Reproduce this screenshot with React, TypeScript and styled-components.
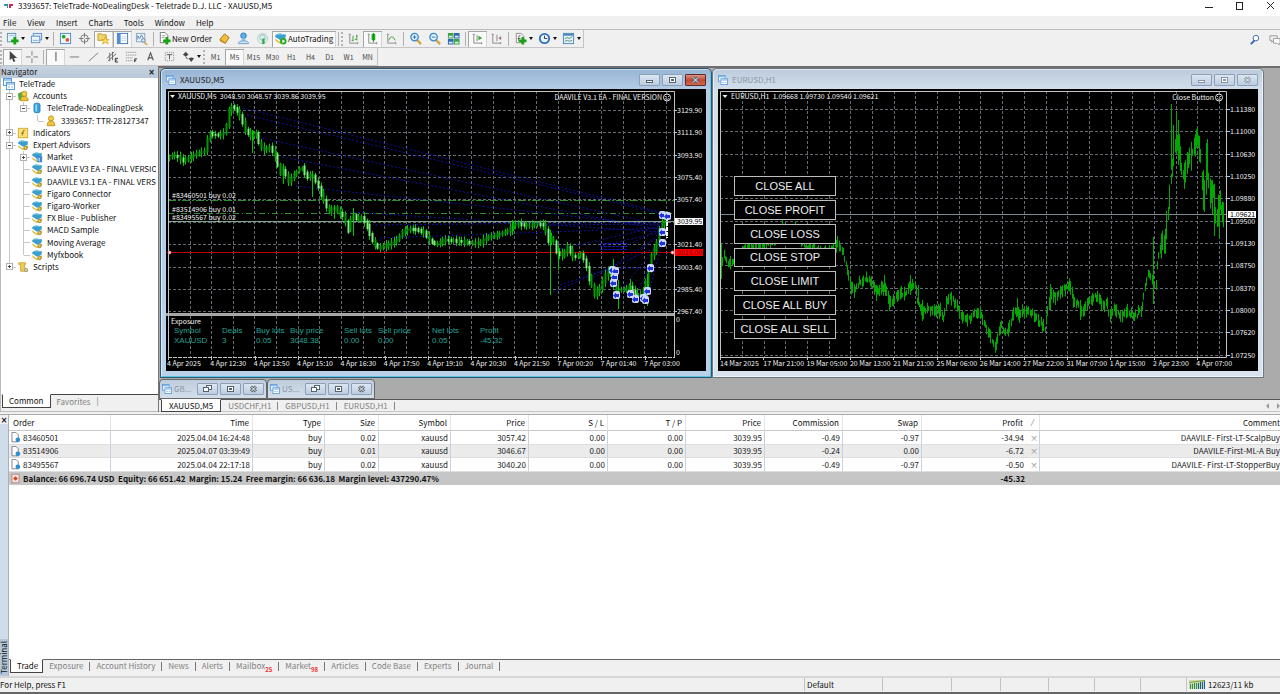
import React from 'react';
import styled, { createGlobalStyle, css } from 'styled-components';

const uiFont = '"Noto Sans CJK SC", "Noto Sans", sans-serif';
const chartFont = '"Noto Sans CJK SC", "Noto Sans", sans-serif';

const Global = createGlobalStyle`
  * { box-sizing: border-box; }
  body { margin: 0; background: #f0f0f0; color: #111; font: 8px/12px ${uiFont}; }
  button, input { font: inherit; color: inherit; margin: 0; padding: 0; border: 0; background: none; }
  ul { list-style: none; margin: 0; padding: 0; }
  svg { display: block; flex: none; }
`;

/* ---------- shell ---------- */

const App_ = styled.div`
  display: flex;
  flex-direction: column;
  min-height: 100vh;
  overflow: hidden;
`;

const TitleBar = styled.header`
  display: flex;
  align-items: flex-start;
  gap: 4px;
  height: 16px;
  padding-left: 4px;
  background: #fff;
`;

const Title = styled.h1`
  flex: 1;
  margin: 0;
  font-size: 8px;
  font-weight: 400;
  line-height: 12px;
`;

const Captions = styled.div`
  display: flex;
  gap: 12px;
`;

const Caption = styled.button`
  width: 19px;
  height: 12px;
  display: grid;
  place-items: center;
`;

const MenuBar = styled.nav`
  display: flex;
  height: 14px;
  border-bottom: 1px solid #bcbcbc;
  gap: 11px;
  padding-left: 3px;
`;

const MenuItem = styled.button`
  line-height: 12px;
`;

const ToolBar = styled.div`
  display: flex;
  align-items: center;
  height: 18px;
  width: max-content;
  border: solid #c4c4c4;
  border-width: 0 1px 1px 0;
`;

const ToolRow = styled.div`
  display: flex;
  align-items: center;
  justify-content: space-between;
`;

const RightTools = styled.div`
  display: flex;
  gap: 7px;
  margin-right: -1px;
`;

const Grip = styled.span`
  width: 3px;
  height: 14px;
  border-left: 2px dotted #b4b4b4;
`;

const Sep = styled.span`
  width: 1px;
  height: 14px;
  margin: 0 2px;
  background: #b0b0b0;
`;

const Tool = styled.button<{ $on?: boolean; $w?: number }>`
  display: flex;
  align-items: center;
  justify-content: center;
  gap: 1px;
  width: ${p => p.$w ?? 19}px;
  height: 16px;
  color: #444;
  white-space: nowrap;
  ${p => p.$on && css`
    background: #f9f9f9;
    box-shadow: inset 1px 1px 0 #a6a6a6, inset -1px 0 0 #d4d4d4;
  `}
`;

const TextTool = styled(Tool)`
  width: auto;
  padding: 0 3px 0 2px;
  color: #111;
`;

const Period = styled(Tool)`
  font-size: 7px;
`;

const DropMark = styled.span`
  margin-left: 1px;
  border: 2px solid transparent;
  border-top: 3px solid #111;
  border-bottom: 0;
`;

const Workspace = styled.div`
  display: flex;
  height: 346px;
`;

/* ---------- navigator ---------- */

const Navigator = styled.aside`
  display: flex;
  flex-direction: column;
  width: 158px;
  background: #fff;
  border-left: 1px solid #bbb;
`;

const PanelHead = styled.div`
  display: flex;
  justify-content: space-between;
  height: 12px;
  padding-right: 3px;
  background: linear-gradient(#c6d3e0, #b9c8d8);
  line-height: 12px;
`;

const CloseMark = styled.button`
  font: 700 8px/11px "DejaVu Sans", sans-serif;
`;

const Tree = styled.ul`
  display: grid;
  grid-template-rows: repeat(16, minmax(0, 1fr));
  height: 195px;
  margin-right: 2px;
  overflow: hidden;
`;

const TreeRow = styled.li`
  display: flex;
  align-items: center;
  padding-left: 2px;
  white-space: nowrap;
`;

const TreeLabel = styled.span`
  margin-left: 4px;
  line-height: 12px;
`;

const Guide = styled.span<{ $v?: 'full' | 'half'; $h?: boolean }>`
  align-self: stretch;
  flex: none;
  display: grid;
  place-items: center;
  width: 14px;
  background:
    linear-gradient(#c6c6c6, #c6c6c6) 6px 0 / ${p => (p.$v === 'full' ? '1px 100%' : p.$v === 'half' ? '1px 50%' : '0 0')} no-repeat,
    linear-gradient(#c6c6c6, #c6c6c6) 7px 6px / ${p => (p.$h ? '6px 1px' : '0 0')} no-repeat;
`;

const Expander = styled.button<{ $open?: boolean }>`
  width: 7px;
  height: 7px;
  margin-right: 1px;
  border: 1px solid #b0b0b0;
  background:
    linear-gradient(#445, #445) center / 3px 1px no-repeat,
    ${p => (p.$open ? '' : 'linear-gradient(#445, #445) center / 1px 3px no-repeat,')}
    #fff;
`;

const NavTabs = styled.div`
  display: flex;
  height: 18px;
  margin: auto 0 0;
  background: #f0f0f0;
  border-bottom: 1px solid #bbb;
`;

const NavTab = styled.button<{ $on?: boolean }>`
  height: 14px;
  padding: 0 6px;
  color: #808080;
  border-top: 1px solid #444;
  ${p => p.$on && css`
    color: #111;
    background: #fff;
    border: 1px solid #444;
    border-top-color: #fff;
    margin-left: 1px;
  `}
`;

const TabRule = styled.span`
  flex: 1;
  border-top: 1px solid #444;
  line-height: 12px;
  color: #777;
`;

/* ---------- MDI area ---------- */

const MdiColumn = styled.main`
  flex: 1;
  min-width: 0;
  display: flex;
  flex-direction: column;
  border-left: 1px solid #777;
`;

const Desktop = styled.div`
  position: relative;
  height: 333px;
  overflow: hidden;
  background: #ababab;
  border-top: 2px solid #6f6f6f;
`;

const ChartWindow = styled.section<{ $x: number; $active?: boolean }>`
  position: absolute;
  left: ${p => p.$x}px;
  top: 0;
  width: 552px;
  height: 310px;
  padding: 0 5px;
  border: 1px solid ${p => (p.$active ? '#2c5870' : '#6d7780')};
  border-radius: 5px 5px 0 0;
  background: ${p => (p.$active ? 'linear-gradient(#98b4d4, #b5cce6 21px, #b9d1ea)' : 'linear-gradient(#bccbdc, #d3dfeb 21px, #d8e3ef)')};
  box-shadow: inset 1px 1px 0 #ffffff88, inset -1px -1px 0 ${p => (p.$active ? '#5fc3e4' : '#eef3f8')};
`;

const WindowBar = styled.header<{ $active?: boolean }>`
  display: flex;
  align-items: center;
  gap: 4px;
  height: 20px;
  padding-top: 2px;
  color: ${p => (p.$active ? '#222' : '#8c98a6')};
`;

const WindowName = styled.h2`
  flex: 1;
  margin: 0;
  font-size: 8px;
  font-weight: 400;
`;

const WinButtons = styled.div`
  display: flex;
  gap: 2px;
`;

const WinButton = styled.button<{ $close?: boolean }>`
  display: grid;
  place-items: center;
  width: 21px;
  height: 12px;
  border: 1px solid ${p => (p.$close ? '#5d2a2a' : '#8da0b8')};
  border-radius: 1px;
  background: ${p => (p.$close ? 'linear-gradient(#dc9384, #c24630 50%, #cf6a4e)' : 'linear-gradient(#dbe6f2, #bccde0)')};
`;

const ChartBody = styled.div`
  position: relative;
  width: 540px;
  height: 282px;
  background: #000;
`;

const CloseButtons = styled.div`
  position: absolute;
  left: 16px;
  top: 87px;
  width: 102px;
  height: 163px;
  display: grid;
  grid-auto-rows: 1fr;
  gap: 4px;
`;

const CloseButton = styled.button`
  background: #000;
  color: #eee;
  border: 1px solid #bdbdbd;
  font: 11px/12px "Liberation Sans", Arial, sans-serif;
  white-space: nowrap;
`;

const Minimized = styled.div`
  position: absolute;
  left: 0;
  bottom: 0;
  display: flex;
`;

const MiniWindow = styled.section`
  display: flex;
  align-items: center;
  gap: 2px;
  width: 108px;
  height: 20px;
  padding: 0 2px;
  border: 1px solid #666;
  border-radius: 4px 4px 0 0;
  background: linear-gradient(#bfcddd, #d3deea);
  color: #8c98a6;
`;

const MiniName = styled.span`
  flex: 1;
`;

const ChartTabs = styled.div`
  display: flex;
  height: 13px;
  padding-left: 2px;
  border-top: 1px solid #555;
  border-bottom: 1px solid #c6c6c6;
  color: #808080;
`;

const ChartTab = styled.button<{ $on?: boolean }>`
  height: 13px;
  margin-top: -1px;
  padding: 0 7px;
  position: relative;
  line-height: 12px;
  ${p => p.$on
    ? css`background: #fff; color: #111; border: 1px solid #444; border-top-color: #fff;`
    : css`&::after { content: ''; position: absolute; right: 0; top: 3px; height: 8px; border-right: 1px solid #888; }`}
`;

const TabArrows = styled.div`
  display: flex;
  align-items: center;
  gap: 8px;
  margin-left: auto;
`;

const TabArrow = styled.button<{ $left?: boolean }>`
  border: 3px solid transparent;
  border-${p => (p.$left ? 'right' : 'left')}-color: #999;
  border-${p => (p.$left ? 'left' : 'right')}: 0;
`;

/* ---------- terminal ---------- */

const Terminal = styled.section`
  flex: 1;
  display: flex;
  margin-top: 2px;
  border-top: 1px solid #aaa;
`;

const SideStrip = styled.div`
  display: flex;
  flex-direction: column;
  align-items: center;
  justify-content: space-between;
  width: 8px;
  background: linear-gradient(#f0f0f0 9px, #cfdcea 9px);
`;

const SideName = styled.span`
  writing-mode: vertical-rl;
  transform: rotate(180deg);
  line-height: 8px;
  padding: 2px 0;
  background: #b4c6d9;
`;

const TerminalBody = styled.div`
  flex: 1;
  min-width: 0;
  display: flex;
  flex-direction: column;
  background: #fff;
  border-left: 1px solid #b0b0b0;
`;

const Orders = styled.table`
  width: 100%;
  table-layout: fixed;
  border-collapse: separate;
  border-spacing: 0;
  th, td { padding: 0 2px 0 0; text-align: right; white-space: nowrap; overflow: hidden; line-height: 12px; font-weight: 400; }
  th { height: 16px; border-right: 1px solid #e4e4e4; border-bottom: 1px solid #c8c8c8; padding-right: 3px; }
  td { height: 13px; border-right: 1px solid #c8d2dc; color: #222; }
  th:first-child { text-align: left; padding-left: 4px; }
  th:last-child, td:last-child { border-right: 0; padding-right: 0; }
`;

const OrderRow = styled.tr<{ $odd?: boolean }>`
  td { height: ${p => (p.$odd ? 13 : 14)}px; background: ${p => (p.$odd ? '#ebebeb' : '#fff')}; border-bottom: 1px solid #dedede; }
`;

const TotalRow = styled.tr`
  td { background: #c6c6c6; border-right: 0; font-weight: 700; color: #111; }
  td:first-child { text-align: left; }
`;

const CellFlex = styled.span`
  display: flex;
  align-items: center;
  gap: 2px;
  padding-left: 1px;
`;

const ProfitCell = styled.span`
  display: flex;
  justify-content: flex-end;
  gap: 6px;
`;

const Dismiss = styled.span`
  width: 7px;
  color: #888;
  text-align: center;
  flex: none;
`;

const TerminalTabs = styled.div`
  display: flex;
  height: 17px;
  margin-top: auto;
  background: #f0f0f0;
  border-top: 1px solid #666;
  padding-left: 1px;
  color: #808080;
`;

const TerminalTab = styled.button<{ $on?: boolean }>`
  position: relative;
  height: 14px;
  margin-top: -1px;
  padding: 0 7px 0 6px;
  line-height: 12px;
  ${p => p.$on
    ? css`background: #fff; color: #111; border: 1px solid #444; border-top-color: #fff; padding: 0 4px 0 6px;`
    : css`&::after { content: ''; position: absolute; right: 0; top: 3px; height: 9px; border-right: 1px solid #777; }`}
`;

const Badge = styled.sub`
  color: #f03030;
  font-size: 6px;
  font-weight: 700;
  line-height: 6px;
`;

const StatusBar = styled.footer`
  display: flex;
  height: 18px;
  padding-bottom: 1px;
  border-top: 2px solid #d6d6d6;
  border-bottom: 2px solid #666;
  line-height: 14px;
`;

const StatusHelp = styled.span`
  flex: 1;
`;

const StatusCell = styled.span<{ $w: number }>`
  display: flex;
  align-items: center;
  gap: 3px;
  width: ${p => p.$w}px;
  padding-left: 2px;
  border-left: 1px solid #c2c2c2;
`;

/* ---------- icons ---------- */

type IconName =
  | 'newChart' | 'profiles' | 'market' | 'cross' | 'favor' | 'navi' | 'tester' | 'order' | 'editor'
  | 'options' | 'signal' | 'auto' | 'bars' | 'candles' | 'line' | 'zoomIn' | 'zoomOut' | 'tile' | 'scroll'
  | 'shift' | 'indic' | 'clock' | 'template' | 'search' | 'chat' | 'pointer' | 'crosshair' | 'vline' | 'hline'
  | 'trend' | 'channel' | 'fibo' | 'text' | 'label' | 'arrows' | 'accounts' | 'server' | 'user' | 'fx' | 'expert'
  | 'expertMarket' | 'script' | 'doc' | 'balance';

const axes = <path d="M3 2v10h9M2 3l1-1 1 1M11 11l1 1-1 1" stroke="#888" fill="none" />;
const plus = <path d="M9.500 5.500v8M5.500 9.500h8" stroke="#16a316" strokeWidth="3" />;
const hat = (
  <>
    <path d="M1 7l6 4 6-4v3l-6 3-5-3z" fill="#e3bf3d" />
    <path d="M1 5c1-3 4-4 7-3l5 1-1 4-5 2z" fill="#3b9fcc" />
    <path d="M4 3c2-1 4-1 6 0" stroke="#8fd5ee" fill="none" />
  </>
);

const glyphs: Record<IconName, React.ReactNode> = {
  newChart: <><rect x="1.500" y="1.500" width="9" height="9" fill="#e8f2fa" stroke="#5b8fb9" /><path d="M3 4h6" stroke="#9bb" />{plus}</>,
  profiles: <><rect x="3.500" y="1.500" width="9" height="7" fill="#dcebf8" stroke="#5b8fc9" /><rect x="1.500" y="4.500" width="9" height="7" fill="#eef6fd" stroke="#5b8fc9" /><path d="M3 9h6" stroke="#7aa8d8" /></>,
  market: <><rect x="1.500" y="1.500" width="11" height="11" fill="#eef6fd" stroke="#4b8bc9" /><circle cx="5" cy="5" r="2" fill="#25a825" /><circle cx="9" cy="8.500" r="2" fill="#e0542c" /></>,
  cross: <><circle cx="7" cy="7" r="4" fill="none" stroke="#777" /><path d="M7 1v5M7 8v5M1 7h5M8 7h5" stroke="#777" /></>,
  favor: <><path d="M1 2h4l1 1h4v6H1z" fill="#f2d56b" stroke="#c79a26" /><path d="M9 5l1 3h3l-2 2 1 3-3-2-3 2 1-3-2-2h3z" fill="#ffe04a" stroke="#c79a26" strokeWidth=".7" /></>,
  navi: <><rect x="1.500" y="1.500" width="11" height="11" fill="#fff" stroke="#3d78c2" /><path d="M2 2h3v10H2z" fill="#4f8fd8" /><path d="M6 5h5M6 7h5M6 9h5" stroke="#c3d6ea" /></>,
  tester: <><rect x="1.500" y="1.500" width="9" height="9" fill="#eef3f8" stroke="#8aa4bd" /><path d="M3 8V4l2 3 2-4 2 4" stroke="#5a86b5" fill="none" /><circle cx="9" cy="9" r="2" fill="#cfe6f7" stroke="#5a86b5" /><path d="M10 11l3 3" stroke="#c99a3a" strokeWidth="1.500" /></>,
  order: <><path d="M2.500 .5h5l3 3v8h-8z" fill="#fff" stroke="#777" /><path d="M4 4h4M4 6h3" stroke="#999" />{plus}</>,
  editor: <><path d="M2 8l5-6 5 4-4 6z" fill="#f0be3c" stroke="#a8761d" /><path d="M2 8l6 4v1L2 10z" fill="#c48e22" /></>,
  options: <><circle cx="7" cy="4" r="3" fill="#5fb0e8" stroke="#2a74b4" /><path d="M5 7h4v3H5z" fill="#8cc7ee" /><path d="M1.500 12.500q0-3 5.500-3t5.500 3z" fill="#cfe4f5" stroke="#6f9fc8" /></>,
  signal: <><circle cx="7" cy="7" r="5.500" fill="#e3efea" stroke="#b5ccc4" /><circle cx="7" cy="6" r="3" fill="none" stroke="#8ab8d0" /><path d="M8 13V7" stroke="#33a84a" strokeWidth="2.500" /></>,
  auto: <>{hat}<circle cx="10" cy="10" r="3.500" fill="#27ad27" /><path d="M9 8l3 2-3 2z" fill="#fff" /></>,
  bars: <>{axes}<path d="M6.500 4v6M6.500 9H5M10.500 3v6M10.500 4h1M8.500 8h2" stroke="#3c9a3c" fill="none" /></>,
  candles: <>{axes}<rect x="6" y="2" width="4" height="7" rx="1" fill="#1db31d" /><path d="M8 1v10" stroke="#158915" /></>,
  line: <>{axes}<path d="M4 9q3-8 7 0" stroke="#3c9a3c" fill="none" /></>,
  zoomIn: <><path d="M8 8l5 5" stroke="#d3a53c" strokeWidth="2.500" /><circle cx="6" cy="5.500" r="4" fill="#e3f3ff" stroke="#3a87c8" strokeWidth="1.400" /><path d="M6 3.500v4M4 5.500h4" stroke="#2a6eb0" /></>,
  zoomOut: <><path d="M8 8l5 5" stroke="#d3a53c" strokeWidth="2.500" /><circle cx="6" cy="5.500" r="4" fill="#e3f3ff" stroke="#3a87c8" strokeWidth="1.400" /><path d="M4 5.500h4" stroke="#2a6eb0" /></>,
  tile: <><path d="M1 1h6v6H1zM7.500 7.500h6v6h-6z" fill="#3da33d" /><path d="M7.500 1h6v6h-6zM1 7.500h6v6H1z" fill="#2d69b5" /><path d="M2 4h4v2H2zM8.500 4h4v2h-4zM2 10.500h4v2H2zM8.500 10.500h4v2h-4z" fill="#dff0ff" /></>,
  scroll: <>{axes}<path d="M6.500 3v7" stroke="#888" /><path d="M8 4l4 2.500L8 9z" fill="#25a825" /></>,
  shift: <>{axes}<path d="M7.500 3v7" stroke="#888" /><path d="M12 4.500L9 6.500 12 8.500z" fill="#a66" /></>,
  indic: <><path d="M2.500 1.500h5l3 3v7h-8z" fill="#fff" stroke="#888" /><path d="M7 4q-2-1-2 2v4M4 7h3" stroke="#555" fill="none" />{plus}</>,
  clock: <><circle cx="7" cy="7" r="5" fill="#e9f4ff" stroke="#2d6fc0" strokeWidth="2" /><path d="M7 4v3h3" stroke="#333" fill="none" /></>,
  template: <><rect x="1.500" y="1.500" width="11" height="11" fill="#e8f3fc" stroke="#4c86ba" /><path d="M2 3h10" stroke="#4c86ba" strokeWidth="2" /><path d="M3 7l3-1 2 1 3-2M3 10l3-1 2 1 3-1" stroke="#47896d" fill="none" /></>,
  search: <><path d="M3 12l4-4" stroke="#3464b0" strokeWidth="2" /><circle cx="8.500" cy="5.500" r="3" fill="#fff" stroke="#3464b0" /></>,
  chat: <><path d="M2 3h8v5H6l-2 2V8H2z" fill="#eee" stroke="#999" /><path d="M6 6h7v5h-1v2l-2-2H6z" fill="#fff" stroke="#999" /></>,
  pointer: <path d="M4 1v10l2.500-2 1.500 4 2-1-1.500-3.500H12z" fill="#444" />,
  crosshair: <path d="M7.500 1v5M7.500 9v5M1 7.500h5M9 7.500h5" stroke="#777" />,
  vline: <path d="M7.500 2v10" stroke="#444" />,
  hline: <path d="M2 7.500h10" stroke="#777" />,
  trend: <path d="M2 12L12 3" stroke="#777" />,
  channel: <><path d="M1 9l8-7M2 12l9-8M4 3v9M7 2v9" stroke="#666" /><path d="M13 9h-3v4h3M10 11h2" stroke="#333" fill="none" /></>,
  fibo: <><path d="M1 2.500h12M1 5.500h12M1 8.500h7M1 11.500h7" stroke="#777" strokeDasharray="1 1" /><path d="M10.500 13V9.500H13M10 11.500h2" stroke="#333" fill="none" /></>,
  text: <path d="M4 11l3-8 3 8M5 8.500h4" stroke="#555" strokeWidth="1.200" fill="none" />,
  label: <><rect x="2.500" y="2.500" width="9" height="9" fill="none" stroke="#888" strokeDasharray="1 1" /><path d="M4 5h6M7 5v5" stroke="#555" fill="none" /></>,
  arrows: <><path d="M1 5l3-3 3 3-3 2z" fill="#444" /><path d="M7 9l3-1 3 1-3 4z" fill="#444" /><path d="M4 7l2 3" stroke="#444" /></>,
  accounts: <><path d="M1 4l5-2 2 3-1 7H2z" fill="#4fae3a" /><circle cx="8.500" cy="4.500" r="3" fill="#f3cf45" stroke="#b98e1c" /><path d="M4 12.500q0-5 4.500-5t4.500 5z" fill="#eec33a" stroke="#b98e1c" /></>,
  server: <><rect x="3.500" y="1.500" width="7" height="11" rx="2" fill="#3aa5dc" stroke="#2479ad" /><path d="M5 3h2v8H5z" fill="#8fd8f4" /></>,
  user: <><circle cx="7" cy="4" r="3" fill="#f3cf45" stroke="#b98e1c" /><path d="M2.500 12.500q0-5.500 4.500-5.500t4.500 5.500z" fill="#eec33a" stroke="#b98e1c" /></>,
  fx: <><rect x="1.500" y="1.500" width="11" height="11" fill="#fbe277" stroke="#cda52e" /><path d="M9 4q-2-1-2 2l-1 4M5 7h3" stroke="#8a5a12" fill="none" /></>,
  expert: <>{hat}<circle cx="10" cy="10.500" r="2" fill="#e8c84a" stroke="#8a7a3a" /></>,
  expertMarket: <>{hat}<path d="M6 6h7v7H7z" fill="#3f86cf" /><path d="M8 8v4M10 8v4" stroke="#cfe6ff" /></>,
  script: <><path d="M2 2h8v2H9v6h3v2H4V4H2z" fill="#f0cc4d" stroke="#c39a28" strokeWidth=".8" /><circle cx="10.500" cy="10.500" r="2" fill="#dca" stroke="#997" /></>,
  doc: <><path d="M2.500 .5h5l3 3v9h-8z" fill="#fff" stroke="#667" /><circle cx="10" cy="10" r="3" fill="#2f8fd0" /></>,
  balance: <><rect x="2.500" y="1.500" width="9" height="11" fill="#f6e4df" stroke="#a77" /><path d="M7 4l3 3-3 3-3-3z" fill="#d8431f" /></>,
};

const Icon = ({ name, size = 13 }: { name: IconName; size?: number }) => (
  <svg width={size} height={size} viewBox="0 0 14 14" aria-hidden="true">{glyphs[name]}</svg>
);

const TrafficIcon = () => (
  <svg width="16" height="9" viewBox="0 0 16 9" aria-hidden="true">
    <path d="M0 0h16v9H0z" fill="#c9dcae" />
    <path d="M1.500 9V4M3.500 9V4M5.500 9V3M7.500 9V3" stroke="#2f8f4f" />
    <path d="M9.500 9V3M11.500 9V2M13.500 9V2M15.500 9V1" stroke="#1f5a98" />
    <path d="M0 2.500L16 .5" stroke="#7f9a3c" />
  </svg>
);

const WindowIcon = ({ size = 10 }: { size?: number }) => (
  <svg width={size} height={size} viewBox="0 0 12 12" aria-hidden="true">
    <rect x=".5" y=".5" width="8" height="7" fill="#eaf4fd" stroke="#5a9bdc" />
    <path d="M1 2h7" stroke="#5a9bdc" />
    <rect x="3.500" y="4.500" width="8" height="7" fill="#fff" stroke="#5a9bdc" />
    <path d="M4 6h7" stroke="#5a9bdc" /><path d="M5 9h2M8 9h2" stroke="#8fb8e0" />
  </svg>
);

const WinGlyph = ({ kind, color }: { kind: 'min' | 'max' | 'close' | 'restore'; color: string }) => (
  <svg width="9" height="8" viewBox="0 0 9 8" aria-hidden="true">
    <g fill="#fff" stroke={color}>
      {kind === 'min' && <rect x="1.500" y="4.500" width="6" height="2" />}
      {kind === 'max' && <><rect x="1.500" y="1.500" width="6" height="5" /><rect x="3.500" y="3.500" width="2" height="1" /></>}
      {kind === 'restore' && <><rect x="3.500" y=".5" width="5" height="4" /><rect x=".5" y="2.500" width="5" height="4" /></>}
      {kind === 'close' && <><path d="M2 1.500l5 5M7 1.500l-5 5" strokeWidth="3" /><path d="M2 1.500l5 5M7 1.500l-5 5" stroke="#fff" /></>}
    </g>
  </svg>
);

/* ---------- charts ---------- */

type Pt = [number, number];

const random = (seed: number) => () => {
  seed = (seed * 16807) % 2147483647;
  return seed / 2147483647;
};

const sample = (pts: Pt[], x: number) => {
  let i = 1;
  while (i < pts.length - 1 && pts[i][0] < x) i++;
  const [ax, ay] = pts[i - 1];
  const [bx, by] = pts[i];
  return ay + ((by - ay) * Math.min(1, Math.max(0, (x - ax) / (bx - ax))));
};

const steps = (from: number, pitch: number, n: number) => Array.from({ length: n }, (_, i) => Math.round(from + i * pitch) + 0.5);

const goldPath: Pt[] = [
  [168, 160], [174, 155], [180, 157], [186, 161], [193, 157], [200, 153], [208, 151], [211, 133], [216, 135], [222, 135],
  [228, 132], [231, 112], [235, 105], [240, 112], [244, 120], [248, 130], [254, 137], [259, 133], [262, 147], [268, 150],
  [272, 147], [278, 156], [282, 175], [286, 168], [290, 183], [294, 178], [300, 170], [304, 167], [309, 178], [314, 174],
  [320, 185], [326, 200], [331, 212], [336, 207], [342, 213], [347, 218], [351, 232], [354, 213], [360, 220], [365, 217],
  [370, 228], [374, 240], [380, 248], [390, 245], [398, 241], [405, 232], [411, 229], [420, 230], [427, 233], [432, 240],
  [438, 245], [446, 240], [460, 241], [474, 243], [482, 243], [490, 237], [500, 235], [510, 231], [515, 225], [522, 224],
  [530, 226], [538, 224], [547, 225], [550, 242], [555, 236], [558, 252], [564, 256], [570, 247], [576, 258], [583, 254],
  [588, 263], [592, 280], [597, 295], [602, 288], [608, 275], [613, 270], [617, 290], [622, 290], [628, 289], [632, 287],
  [637, 294], [642, 297], [646, 290], [650, 275], [654, 255], [658, 247], [662, 230], [668, 214],
];

const goldSpikes: [number, number, number][] = [
  [252, 130, 153], [283, 165, 184], [312, 172, 197], [334, 205, 219], [353, 208, 236], [512, 220, 235], [550, 230, 295],
  [558, 245, 270], [613, 259, 280], [618, 280, 309], [630, 279, 295], [637, 288, 303], [647, 274, 306],
];

const euroPath: Pt[] = [
  [721, 262], [724, 255], [727, 262], [733, 262], [745, 250], [760, 245], [775, 240], [782, 226], [788, 240], [796, 228],
  [805, 246], [815, 248], [825, 252], [838, 243], [842, 250], [846, 265], [850, 285], [854, 290], [860, 281], [868, 278],
  [872, 283], [876, 292], [880, 288], [885, 290], [890, 304], [896, 297], [900, 291], [905, 296], [910, 285], [915, 286],
  [918, 304], [922, 312], [928, 309], [936, 311], [940, 310], [943, 318], [946, 302], [950, 297], [956, 306], [962, 318],
  [970, 320], [975, 312], [980, 314], [985, 325], [990, 336], [994, 347], [998, 335], [1001, 325], [1004, 332], [1008, 330],
  [1013, 312], [1018, 315], [1022, 312], [1030, 312], [1038, 320], [1045, 328], [1050, 295], [1056, 297], [1062, 290],
  [1070, 286], [1073, 300], [1078, 305], [1082, 312], [1088, 300], [1098, 296], [1103, 308], [1106, 300], [1109, 318],
  [1113, 308], [1120, 315], [1126, 312], [1135, 316], [1142, 308], [1147, 275], [1152, 280], [1155, 290], [1158, 255],
  [1162, 242], [1165, 243], [1168, 210], [1171, 175], [1173, 155], [1176, 140], [1179, 150], [1181, 170], [1184, 177],
  [1188, 160], [1192, 152], [1197, 138], [1200, 152], [1203, 200], [1207, 165], [1210, 195], [1213, 190], [1216, 222],
  [1219, 205], [1223, 215],
];

const euroSpikes: [number, number, number][] = [
  [721, 244, 279], [876, 285, 301], [884, 275, 292], [889, 295, 311], [910, 275, 295], [918, 285, 305], [922, 300, 321],
  [1017, 298, 316], [1050, 284, 310], [1070, 281, 295], [1080, 300, 320], [1153, 237, 304], [1171, 104, 170],
  [1173, 125, 165], [1176, 112, 155], [1178, 120, 165], [1197, 128, 145], [1203, 170, 208], [1204, 180, 212],
  [1206, 143, 190], [1207, 139, 180], [1212, 180, 214], [1214, 195, 236], [1219, 195, 238], [1220, 190, 210],
];

const tradeLines: [number, number, number, number][] = [
  [243, 108, 664, 213], [247, 115, 662, 214], [262, 138, 662, 225], [282, 157, 662, 230], [296, 186, 662, 226], [350, 212, 662, 232],
  [376, 225, 662, 222], [380, 238, 662, 228], [545, 225, 662, 224], [556, 250, 662, 226], [553, 292, 662, 245], [600, 246, 662, 232],
  [618, 250, 662, 228], [590, 280, 660, 236], [618, 272, 660, 232], [616, 296, 662, 240], [634, 299, 662, 242], [649, 291, 662, 244],
  [560, 285, 612, 268], [612, 268, 650, 268],
];

const trades: Pt[] = [
  [662, 215], [667, 216], [662, 232], [662, 243], [650, 268], [612, 270], [615, 271], [614, 277], [613, 283], [616, 295],
  [630, 294], [635, 299], [643, 298], [645, 300], [647, 291],
];

const Axis = styled.text<{ $ink?: string }>`
  fill: ${p => p.$ink ?? '#f2f2f2'};
  font: 7px ${chartFont};
`;

const Exposure = styled.text`
  fill: #25a295;
  font: 8px "Liberation Sans", Arial, sans-serif;
`;

const Grid = ({ xs, ys, x1, x2, y1, y2 }: { xs: number[]; ys: number[]; x1: number; x2: number; y1: number; y2: number }) => (
  <g stroke="#636a72" strokeDasharray="3 2" fill="none">
    {xs.map(x => <path key={x} d={`M${x} ${y1}V${y2}`} />)}
    {ys.map(y => <path key={y} d={`M${x1} ${y}H${x2}`} />)}
  </g>
);

const Face = ({ x, y }: { x: number; y: number }) => (
  <g stroke="#e6e6e6" fill="none">
    <circle cx={x} cy={y} r="3.500" />
    <path d={`M${x - 2} ${y - 1}h1M${x + 1} ${y - 1}h1M${x - 2} ${y + 1}q2 2 4 0`} strokeWidth=".8" />
  </g>
);

const GoldChart = () => {
  const rnd = random(77);
  const candles = Array.from({ length: 185 }, (_, i) => {
    const x = Math.round(169 + i * 2.707);
    const a = sample(goldPath, x);
    const b = sample(goldPath, x + 3);
    const wide = 2 + rnd() * 4;
    return { x, top: Math.min(a, b) - wide / 3, bottom: Math.max(a, b) + wide / 3, up: b < a || rnd() > 0.7, wick: 1 + rnd() * 3 };
  });
  const prices = ['3129.90', '3111.90', '3093.90', '3075.40', '3057.40', '', '3021.40', '3003.40', '2985.40', '2967.40'];
  const times = ['4 Apr 2025', '4 Apr 12:30', '4 Apr 13:50', '4 Apr 15:10', '4 Apr 16:30', '4 Apr 17:50', '4 Apr 19:10', '4 Apr 20:30', '4 Apr 21:50', '7 Apr 00:20', '7 Apr 01:40', '7 Apr 03:00'];
  const cols: [number, string, string][] = [
    [174, 'Symbol', 'XAUUSD'], [222, 'Deals', '3'], [256, 'Buy lots', '0.05'], [290, 'Buy price', '3048.38'],
    [344, 'Sell lots', '0.00'], [378, 'Sell price', '0.00'], [432, 'Net lots', '0.05'], [480, 'Profit', '-45.32'],
  ];
  return (
    <svg width="540" height="282" viewBox="166 89 540 282" role="img" aria-label="XAUUSD M5 chart">
      <Grid xs={steps(189.5, 21.66, 23)} ys={steps(110, 22.36, 10)} x1={168} x2={674} y1={91} y2={357} />
      <g stroke="#10109a" strokeDasharray="2 2">
        {tradeLines.map(([a, b, c, d]) => <path key={`${a}-${b}`} d={`M${a} ${b}L${c} ${d}`} />)}
      </g>
      <path d="M600 243.500h27M600 246.500h27M600 249.500h27" fill="none" stroke="#1414b8" strokeDasharray="3 1" />
      <g stroke="#2f8f2f"><path d="M168 200.500H674" strokeDasharray="8 2 2 2" /><path d="M168 213.500H674" strokeDasharray="6 3 1 3" /></g>
      <path d="M168 221.500H674" stroke="#7fa58a" />
      <path d="M168 252.500H674" stroke="#c00000" />
      {candles.map(c => (
        <g key={c.x}>
          <path d={`M${c.x + 0.5} ${c.top - c.wick}V${c.bottom + c.wick}`} stroke="#00c800" />
          <rect x={c.x - 0.5} y={c.top} width="2" height={c.bottom - c.top} fill={c.up ? '#009a00' : '#7cf07c'} />
        </g>
      ))}
      {goldSpikes.map(([x, a, b]) => <path key={x} d={`M${x}.5 ${a}V${b}`} stroke="#00c800" />)}
      <path d="M667 212V238" stroke="#fff" strokeWidth="2" strokeDasharray="4 1" />
      {trades.map(([x, y]) => (
        <g key={`${x}-${y}`}>
          <rect x={x - 3} y={y - 4} width="7" height="8" rx="2" fill="#cfd6ff" />
          <path d={`M${x - 3} ${y + 0.5}l3-3v6zM${x} ${y - 1}h3v3h-3z`} fill="#1a32e0" />
        </g>
      ))}
      <rect x="166" y="313" width="509" height="3" fill="#a6a6a6" />
      <path d="M168.500 357V91.500H674.500V357" stroke="#c4c4c4" fill="none" />
      <path d="M168 357.500H675" stroke="#c4c4c4" strokeDasharray="4 1" />
      <g stroke="#c4c4c4">
        {steps(110, 22.36, 10).map(y => <path key={y} d={`M674 ${y}h3`} />)}
        {steps(168, 43.32, 12).map(x => <path key={x} d={`M${x} 356v4`} />)}
      </g>
      <path d="M170 95h5l-2.500 3z" fill="#eee" />
      <Axis x="178" y="99">XAUUSD,M5&nbsp; 3048.50 3048.57 3039.86 3039.95</Axis>
      <Axis x="662" y="100" textAnchor="end">DAAVILE V3.1 EA - FINAL VERSION</Axis>
      <Face x={667} y={97.5} />
      <Axis x="172" y="198">#83460501 buy 0.02</Axis>
      <Axis x="172" y="212">#83514906 buy 0.01</Axis>
      <Axis x="172" y="220">#83495567 buy 0.02</Axis>
      {prices.map((p, i) => <Axis key={i} x="677" y={113 + i * 22.36}>{p}</Axis>)}
      <rect x="675" y="218" width="28" height="7" fill="#fff" />
      <Axis x="677" y="224" $ink="#000">3039.95</Axis>
      <rect x="675" y="249" width="28" height="7" fill="#f00" />
      <Axis x="677" y="255" $ink="#800000">3015.00</Axis>
      <circle cx="169.500" cy="252.500" r="1.500" fill="#fff" stroke="#f66" />
      <circle cx="672.500" cy="252.500" r="1.500" fill="#fff" stroke="#f66" />
      <Axis x="676" y="322">0</Axis>
      <Axis x="676" y="355">0</Axis>
      <Axis x="171" y="324">Exposure</Axis>
      {cols.map(([x, h, v]) => (
        <g key={h}><Exposure x={x} y="333">{h}</Exposure><Exposure x={x} y="343">{v}</Exposure></g>
      ))}
      {times.map((t, i) => <Axis key={t} x={167 + i * 43.36} y="366">{t}</Axis>)}
    </svg>
  );
};

const EuroChart = () => {
  const rnd = random(1234);
  const bars = Array.from({ length: 372 }, (_, i) => {
    const x = 721 + i * 1.354;
    const y = sample(euroPath, x);
    const reach = 2 + rnd() * 5 + (x > 1160 ? rnd() * 10 : 0);
    const shift = (rnd() - 0.5) * 5;
    return `M${Math.round(x)}.5 ${(y - reach + shift).toFixed(1)}V${(y + reach + shift).toFixed(1)}`;
  });
  const prices = ['1.11380', '1.11000', '1.10630', '1.10250', '1.09880', '1.09500', '1.09130', '1.08750', '1.08370', '1.08000', '1.07620', '1.07250'];
  const times = ['14 Mar 2025', '17 Mar 21:00', '19 Mar 05:00', '20 Mar 13:00', '21 Mar 21:00', '25 Mar 06:00', '26 Mar 14:00', '27 Mar 22:00', '31 Mar 07:00', '1 Apr 15:00', '2 Apr 23:00', '4 Apr 07:00'];
  return (
    <svg width="540" height="282" viewBox="718 89 540 282" role="img" aria-label="EURUSD H1 chart">
      <Grid xs={steps(742, 21.68, 23)} ys={steps(109, 22.33, 12)} x1={720} x2={1227} y1={91} y2={357} />
      <path d="M720 214.500H1227" stroke="#7a8890" />
      <path d={bars.join('')} stroke="#00a800" fill="none" />
      {euroSpikes.map(([x, a, b]) => <path key={x} d={`M${x}.5 ${a}V${b}`} stroke="#00a800" />)}
      <path d="M720.500 357.500V91.500H1226.500V357.500z" stroke="#c4c4c4" fill="none" />
      <g stroke="#c4c4c4">
        {steps(109, 22.33, 12).map(y => <path key={y} d={`M1227 ${y}h3`} />)}
        {steps(720, 43.36, 12).map(x => <path key={x} d={`M${x} 357v3`} />)}
      </g>
      <path d="M722.500 95h5l-2.500 3z" fill="#eee" />
      <Axis x="731" y="99">EURUSD,H1&nbsp; 1.09668 1.09730 1.09540 1.09621</Axis>
      <Axis x="1214" y="100" textAnchor="end">Close Button</Axis>
      <Face x={1219} y={97.5} />
      {prices.map((p, i) => <Axis key={p} x="1230" y={112 + i * 22.33}>{p}</Axis>)}
      <rect x="1228" y="211" width="28" height="7" fill="#fff" />
      <Axis x="1230" y="217" $ink="#000">1.09621</Axis>
      {times.map((t, i) => <Axis key={t} x={720 + i * 43.3} y="366">{t}</Axis>)}
    </svg>
  );
};

/* ---------- data ---------- */

type Node = { label: string; icon?: IconName; level: number; box?: 'open' | 'closed'; last?: boolean };

const nodes: Node[] = [
  { label: 'TeleTrade', level: 0 },
  { label: 'Accounts', icon: 'accounts', level: 1, box: 'open' },
  { label: 'TeleTrade-NoDealingDesk', icon: 'server', level: 2, box: 'open', last: true },
  { label: '3393657: TTR-28127347', icon: 'user', level: 3, last: true },
  { label: 'Indicators', icon: 'fx', level: 1, box: 'closed' },
  { label: 'Expert Advisors', icon: 'expert', level: 1, box: 'open' },
  { label: 'Market', icon: 'expertMarket', level: 2, box: 'closed' },
  { label: 'DAAVILE V3 EA - FINAL VERSION', icon: 'expert', level: 2 },
  { label: 'DAAVILE V3.1 EA - FINAL VERSION', icon: 'expert', level: 2 },
  { label: 'Figaro Connector', icon: 'expert', level: 2 },
  { label: 'Figaro-Worker', icon: 'expert', level: 2 },
  { label: 'FX Blue - Publisher', icon: 'expert', level: 2 },
  { label: 'MACD Sample', icon: 'expert', level: 2 },
  { label: 'Moving Average', icon: 'expert', level: 2 },
  { label: 'Myfxbook', icon: 'expert', level: 2, last: true },
  { label: 'Scripts', icon: 'script', level: 1, box: 'closed', last: true },
];

const columns = ['Order', 'Time', 'Type', 'Size', 'Symbol', 'Price', 'S / L', 'T / P', 'Price', 'Commission', 'Swap', 'Profit', 'Comment'];
const columnWidths = [102, 142, 72, 54, 72, 78, 79, 78, 79, 78, 79, 118];

const orders = [
  ['83460501', '2025.04.04 16:24:48', 'buy', '0.02', 'xauusd', '3057.42', '0.00', '0.00', '3039.95', '-0.49', '-0.97', '-34.94', 'DAAVILE- First-LT-ScalpBuy'],
  ['83514906', '2025.04.07 03:39:49', 'buy', '0.01', 'xauusd', '3046.67', '0.00', '0.00', '3039.95', '-0.24', '0.00', '-6.72', 'DAAVILE-First-ML-A Buy'],
  ['83495567', '2025.04.04 22:17:18', 'buy', '0.02', 'xauusd', '3040.20', '0.00', '0.00', '3039.95', '-0.49', '-0.97', '-0.50', 'DAAVILE- First-LT-StopperBuy'],
];

const ToolIcon = ({ name, on, drop }: { name: IconName; on?: boolean; drop?: boolean }) => (
  <Tool type="button" aria-label={name} $on={on} $w={drop ? 24 : 19}>
    <Icon name={name} />{drop && <DropMark />}
  </Tool>
);

const Controls = ({ active, mini }: { active?: boolean; mini?: boolean }) => {
  const ink = active || mini ? '#56626f' : '#8793a2';
  return (
    <WinButtons>
      <WinButton type="button" aria-label={mini ? 'Restore' : 'Minimize'}><WinGlyph kind={mini ? 'restore' : 'min'} color={ink} /></WinButton>
      <WinButton type="button" aria-label="Maximize"><WinGlyph kind="max" color={ink} /></WinButton>
      <WinButton type="button" aria-label="Close" $close={active}><WinGlyph kind="close" color={ink} /></WinButton>
    </WinButtons>
  );
};

export default function App() {
  return (
    <App_>
      <Global />
      <TitleBar>
        <svg width="10" height="11" viewBox="0 0 10 11" aria-hidden="true">
          <path d="M0 4h4v4H3V6H0z" fill="#1d9fb0" /><path d="M5 8V4h4v2H7v2z" fill="#d6215b" />
        </svg>
        <Title>3393657: TeleTrade-NoDealingDesk - Teletrade D.J. LLC - XAUUSD,M5</Title>
        <Captions>
          <Caption type="button" aria-label="Minimize"><svg width="8" height="8"><path d="M0 5.500h8" stroke="#222" /></svg></Caption>
          <Caption type="button" aria-label="Maximize"><svg width="8" height="8"><rect x=".5" y=".5" width="6" height="7" fill="none" stroke="#222" /></svg></Caption>
          <Caption type="button" aria-label="Close"><svg width="8" height="8"><path d="M0 0l7 7M7 0L0 7" stroke="#222" /></svg></Caption>
        </Captions>
      </TitleBar>
      <MenuBar>
        {['File', 'View', 'Insert', 'Charts', 'Tools', 'Window', 'Help'].map(m => <MenuItem key={m} type="button">{m}</MenuItem>)}
      </MenuBar>
      <ToolRow>
        <ToolBar>
          <Grip />
          <ToolIcon name="newChart" drop /><ToolIcon name="profiles" drop />
          <Sep />
          <ToolIcon name="market" /><ToolIcon name="cross" /><ToolIcon name="favor" on /><ToolIcon name="navi" on /><ToolIcon name="tester" />
          <Sep />
          <TextTool type="button"><Icon name="order" />New Order</TextTool>
          <ToolIcon name="editor" /><ToolIcon name="options" /><ToolIcon name="signal" />
          <TextTool type="button" $on><Icon name="auto" />AutoTrading</TextTool>
          <Sep /><Grip />
          <ToolIcon name="bars" /><ToolIcon name="candles" on /><ToolIcon name="line" />
          <Sep />
          <ToolIcon name="zoomIn" /><ToolIcon name="zoomOut" /><ToolIcon name="tile" />
          <Sep />
          <ToolIcon name="scroll" on /><ToolIcon name="shift" />
          <Sep />
          <ToolIcon name="indic" drop /><ToolIcon name="clock" drop /><ToolIcon name="template" drop />
        </ToolBar>
        <RightTools><Icon name="search" /><Icon name="chat" /></RightTools>
      </ToolRow>
      <ToolBar>
        <Grip />
        <ToolIcon name="pointer" on /><ToolIcon name="crosshair" />
        <Sep />
        <ToolIcon name="vline" on /><ToolIcon name="hline" /><ToolIcon name="trend" /><ToolIcon name="channel" /><ToolIcon name="fibo" />
        <ToolIcon name="text" /><ToolIcon name="label" /><ToolIcon name="arrows" drop />
        <Grip />
        {['M1', 'M5', 'M15', 'M30', 'H1', 'H4', 'D1', 'W1', 'MN'].map(t => <Period key={t} type="button" $on={t === 'M5'}>{t}</Period>)}
      </ToolBar>
      <Workspace>
        <Navigator>
          <PanelHead><span>Navigator</span><CloseMark type="button" aria-label="Close navigator">×</CloseMark></PanelHead>
          <Tree>
            {nodes.map((n, i) => (
              <TreeRow key={n.label}>
                {n.level >= 1 && (
                  <Guide $v={n.label === 'Scripts' ? 'half' : 'full'} $h={n.level === 1}>
                    {n.level === 1 && <Expander type="button" aria-label={n.label} $open={n.box === 'open'} />}
                  </Guide>
                )}
                {n.level >= 2 && (
                  <Guide $v={n.level === 3 ? undefined : n.last ? 'half' : 'full'} $h={n.level === 2}>
                    {n.level === 2 && n.box && <Expander type="button" aria-label={n.label} $open={n.box === 'open'} />}
                  </Guide>
                )}
                {n.level === 3 && <Guide $v="half" $h />}
                {i === 0 ? <WindowIcon size={12} /> : <Icon name={n.icon!} size={12} />}
                <TreeLabel>{n.label}</TreeLabel>
              </TreeRow>
            ))}
          </Tree>
          <NavTabs>
            <NavTab type="button" $on>Common</NavTab>
            <NavTab type="button">Favorites</NavTab>
            <TabRule>|</TabRule>
          </NavTabs>
        </Navigator>
        <MdiColumn>
          <Desktop>
            <ChartWindow $x={1} $active>
              <WindowBar $active><WindowIcon /><WindowName>XAUUSD,M5</WindowName><Controls active /></WindowBar>
              <ChartBody><GoldChart /></ChartBody>
            </ChartWindow>
            <ChartWindow $x={553}>
              <WindowBar><WindowIcon /><WindowName>EURUSD,H1</WindowName><Controls /></WindowBar>
              <ChartBody>
                <EuroChart />
                <CloseButtons>
                  {['ALL', 'PROFIT', 'LOSS', 'STOP', 'LIMIT', 'ALL BUY', 'ALL SELL'].map(b => <CloseButton key={b} type="button">CLOSE {b}</CloseButton>)}
                </CloseButtons>
              </ChartBody>
            </ChartWindow>
            <Minimized>
              {['GB...', 'US...'].map(n => (
                <MiniWindow key={n}><WindowIcon /><MiniName>{n}</MiniName><Controls mini /></MiniWindow>
              ))}
            </Minimized>
          </Desktop>
          <ChartTabs>
            <ChartTab type="button" $on>XAUUSD,M5</ChartTab>
            {['USDCHF,H1', 'GBPUSD,H1', 'EURUSD,H1'].map(t => <ChartTab key={t} type="button">{t}</ChartTab>)}
            <TabArrows><TabArrow type="button" aria-label="Scroll left" $left /><TabArrow type="button" aria-label="Scroll right" /></TabArrows>
          </ChartTabs>
        </MdiColumn>
      </Workspace>
      <Terminal>
        <SideStrip>
          <CloseMark type="button" aria-label="Close terminal">×</CloseMark>
          <SideName>Terminal</SideName>
        </SideStrip>
        <TerminalBody>
          <Orders>
            <colgroup>
              {columnWidths.map((w, i) => <col key={i} width={w} />)}
              <col />
            </colgroup>
            <thead>
              <tr>
                {columns.map((c, i) => (
                  <th key={i} scope="col">{c === 'Profit' ? <ProfitCell>Profit<Dismiss>⁄</Dismiss></ProfitCell> : c}</th>
                ))}
              </tr>
            </thead>
            <tbody>
              {orders.map((row, r) => (
                <OrderRow key={row[0]} $odd={r === 1}>
                  {row.map((v, i) => (
                    <td key={i}>
                      {i === 0 ? <CellFlex><Icon name="doc" size={11} />{v}</CellFlex>
                        : i === 11 ? <ProfitCell>{v}<Dismiss>×</Dismiss></ProfitCell> : v}
                    </td>
                  ))}
                </OrderRow>
              ))}
              <TotalRow>
                <td colSpan={11}>
                  <CellFlex><Icon name="balance" size={11} />Balance: 66 696.74 USD&nbsp; Equity: 66 651.42&nbsp; Margin: 15.24&nbsp; Free margin: 66 636.18&nbsp; Margin level: 437290.47%</CellFlex>
                </td>
                <td><ProfitCell>-45.32<Dismiss /></ProfitCell></td>
                <td />
              </TotalRow>
            </tbody>
          </Orders>
          <TerminalTabs>
            <TerminalTab type="button" $on>Trade</TerminalTab>
            {['Exposure', 'Account History', 'News', 'Alerts', 'Mailbox', 'Market', 'Articles', 'Code Base', 'Experts', 'Journal'].map(t => (
              <TerminalTab key={t} type="button">
                {t}{t === 'Mailbox' && <Badge>25</Badge>}{t === 'Market' && <Badge>98</Badge>}
              </TerminalTab>
            ))}
          </TerminalTabs>
        </TerminalBody>
      </Terminal>
      <StatusBar>
        <StatusHelp>For Help, press F1</StatusHelp>
        <StatusCell $w={78}>Default</StatusCell>
        <StatusCell $w={69} /><StatusCell $w={49} /><StatusCell $w={48} /><StatusCell $w={46} /><StatusCell $w={46} /><StatusCell $w={46} />
        <StatusCell $w={94}><TrafficIcon />12623/11 kb</StatusCell>
      </StatusBar>
    </App_>
  );
}
